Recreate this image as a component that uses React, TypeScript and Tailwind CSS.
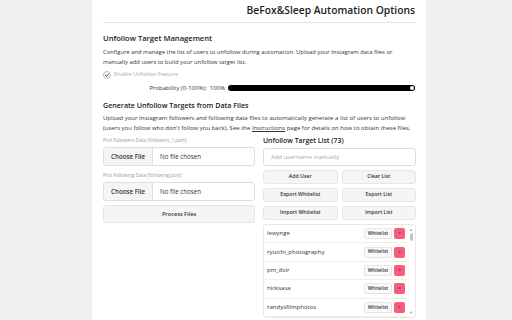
const users = ["lewynge", "ryuichi_photography", "pm_dslr", "nicksasa", "randysfilmphotos"];

function FilePick({ label }: { label: string }) {
  return (
    <div>
      <div className="text-[4.8px] leading-[8px] text-[#999] mb-[3px]">{label}</div>
      <div className="flex h-[19px] border border-[#dedede] rounded-[3px] text-[6.2px] text-[#333] overflow-hidden">
        <div className="w-[49px] bg-[#f5f5f5] border-r border-[#dedede] flex items-center justify-center font-semibold">
          Choose File
        </div>
        <div className="flex items-center pl-[7px]">No file chosen</div>
      </div>
    </div>
  );
}

function Btn({ children }: { children: string }) {
  return (
    <div className="h-[14px] bg-[#f5f5f5] border border-[#e6e6e6] rounded-[3px] flex items-center justify-center text-[5.2px] font-semibold text-[#333]">
      {children}
    </div>
  );
}

export default function App() {
  return (
    <div className="h-[320px] bg-[#f0f0f0] overflow-hidden" style={{ fontFamily: '"Open Sans", "Noto Sans", sans-serif' }}>
      <div className="ml-[92px] w-[334px] h-full bg-white px-[11px]">
        <div className="h-[23px] border-b border-[#e5e5e5] flex items-center justify-end pb-[1px]">
          <h1 className="text-[10.3px] font-semibold text-[#222] leading-none">BeFox&amp;Sleep Automation Options</h1>
        </div>

        <h2 className="mt-[9px] text-[7.6px] font-semibold text-[#222] leading-[12px]">Unfollow Target Management</h2>
        <p className="mt-[3px] text-[5.85px] leading-[10px] text-[#333]">
          Configure and manage the list of users to unfollow during automation. Upload your Instagram data files or
          manually add users to build your unfollow target list.
        </p>
        <div className="mt-[2px] flex items-center gap-[3px] h-[11px]">
          <div className="w-[8px] h-[8px] rounded-full border border-[#bbb] flex items-center justify-center">
            <svg viewBox="0 0 10 10" className="w-[6px] h-[6px]">
              <path d="M2 5.2 L4.2 7.4 L8 2.6" fill="none" stroke="#222" strokeWidth="1.4" />
            </svg>
          </div>
          <span className="text-[5.6px] text-[#aaa]">Enable Unfollow Feature</span>
        </div>
        <div className="mt-[3px] flex items-center justify-end gap-[3px] h-[10px]">
          <span className="text-[6px] text-[#333]">Probability (0-100%):</span>
          <span className="text-[6px] text-[#333]">100%</span>
          <div className="relative w-[187px] h-[6px] rounded-full bg-black">
            <div className="absolute right-[1px] top-[1px] w-[4px] h-[4px] rounded-full bg-white" />
          </div>
        </div>

        <h2 className="mt-[6px] text-[7.1px] font-semibold text-[#222] leading-[12px]">Generate Unfollow Targets from Data Files</h2>
        <p className="mt-[2px] text-[6px] leading-[10px] text-[#333]">
          Upload your Instagram followers and following data files to automatically generate a list of users to unfollow
          (users you follow who don't follow you back). See the <span className="underline">Instructions</span> page for details on how to obtain these files.
        </p>

        <div className="mt-[3px] grid grid-cols-[152px_153px] gap-[8px]">
          <div className="flex flex-col">
            <FilePick label="Pick Followers Data (followers_1.json):" />
            <div className="h-[5px]" />
            <FilePick label="Pick Following Data (following.json):" />
            <div className="mt-[4px] h-[18px] bg-[#f5f5f5] border border-[#e6e6e6] rounded-[3px] flex items-center justify-center text-[5.6px] font-semibold text-[#333]">
              Process Files
            </div>
          </div>
          <div className="flex flex-col">
            <div className="text-[6.9px] font-semibold text-[#222] leading-[10px]">Unfollow Target List (73)</div>
            <div className="mt-[2px] h-[18px] border border-[#dedede] rounded-[3px] flex items-center pl-[7px] text-[6px] text-[#aaa]">
              Add username manually
            </div>
            <div className="mt-[4px] grid grid-cols-2 gap-x-[4px] gap-y-[4px]">
              <Btn>Add User</Btn>
              <Btn>Clear List</Btn>
              <Btn>Export Whitelist</Btn>
              <Btn>Export List</Btn>
              <Btn>Import Whitelist</Btn>
              <Btn>Import List</Btn>
            </div>
            <div className="mt-[4px] h-[94px] border border-[#e8e8e8] rounded-[3px] flex overflow-hidden">
              <div className="flex-1">
                {users.map((u) => (
                  <div key={u} className="h-[18.4px] border-b border-[#eee] flex items-center pl-[3px] pr-[2px]">
                    <span className="flex-1 text-[6px] text-[#333]">{u}</span>
                    <div className="w-[28px] h-[11px] border border-[#e5e5e5] bg-[#fafafa] rounded-[2px] flex items-center justify-center text-[4.8px] font-semibold text-[#333]">
                      Whitelist
                    </div>
                    <div className="ml-[2px] w-[11px] h-[11px] rounded-[2px] bg-[#f65d7f] flex items-center justify-center text-[5px] text-[#333] leading-none">
                      ×
                    </div>
                  </div>
                ))}
              </div>
              <div className="w-[8px] flex flex-col items-center pt-[2px]">
                <span className="text-[4px] text-[#999] leading-[5px]">▲</span>
                <div className="mt-[1px] w-[3px] h-[8px] rounded-full bg-[#c4c4c4]" />
                <div className="flex-1" />
                <span className="text-[4px] text-[#999] leading-[5px] mb-[2px]">▼</span>
              </div>
            </div>
          </div>
        </div>
      </div>
    </div>
  );
}
